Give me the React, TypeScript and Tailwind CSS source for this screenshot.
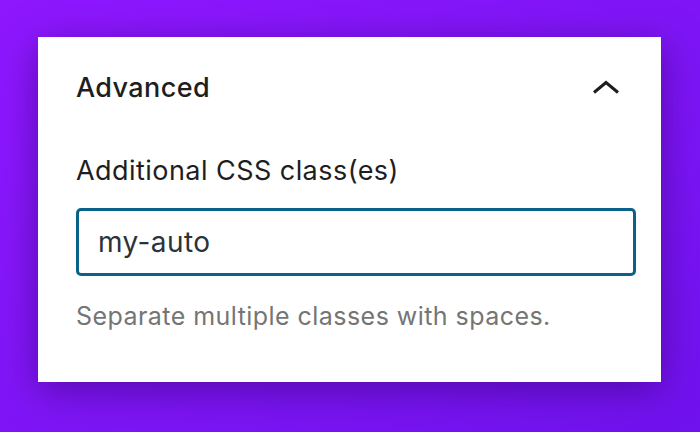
import React from 'react';

const App: React.FC = () => {
  return (
    <div className="w-[700px] h-[432px] bg-gradient-to-br from-[#8f17ff] to-[#7012ee] pt-[37px] pl-[38px] overflow-hidden font-['Inter','Liberation_Sans',sans-serif]">
      <div className="w-[623px] h-[345px] bg-white shadow-[0_8px_36px_rgba(55,0,110,0.55)] pt-[35px] pl-[38px] pr-[25px] flex flex-col">
        <div className="flex items-center justify-between h-[32px]">
          <h2 className="text-[27px] leading-[32px] font-medium text-[#1e1e1e] tracking-[0.4px]">Advanced</h2>
          <svg width="28" height="16" viewBox="0 0 28 16" className="mr-[16px] mt-[-2px]" fill="none">
            <polyline points="2,13.5 14,3.5 26,13.5" stroke="#1e1e1e" strokeWidth="3" />
          </svg>
        </div>

        <label className="mt-[51px] text-[27px] leading-[32px] text-[#1e1e1e] tracking-[0.45px]">
          Additional CSS class(es)
        </label>

        <div className="mt-[21px] h-[68px] border-[3px] border-[#0b6187] rounded-[5px] flex items-center pl-[19px]">
          <span className="text-[28px] leading-[32px] text-[#2c3338] tracking-[0.4px]">my-auto</span>
        </div>

        <p className="mt-[25px] text-[25px] leading-[30px] text-[#757575] tracking-[0.45px]">
          Separate multiple classes with spaces.
        </p>
      </div>
    </div>
  );
};

export default App;
